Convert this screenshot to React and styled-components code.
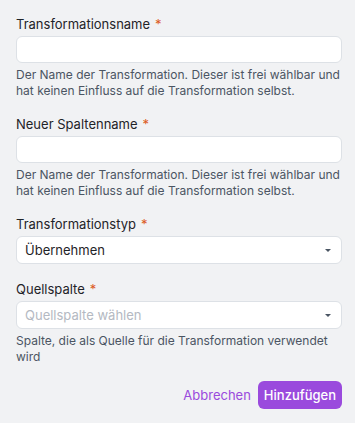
import React from 'react';
import styled, { createGlobalStyle } from 'styled-components';

const GlobalStyle = createGlobalStyle`
  html, body {
    margin: 0;
    padding: 0;
    background: #f1f2f4;
  }
  body {
    font-family: Inter, "Noto Sans", sans-serif;
    -webkit-font-smoothing: antialiased;
  }
`;

const Panel = styled.form`
  box-sizing: border-box;
  width: 355px;
  height: 423px;
  padding: 14px 13px 0 16px;
  background: #f1f2f4;
  display: flex;
  flex-direction: column;
  gap: 15px;
`;

const Field = styled.div`
  display: flex;
  flex-direction: column;
`;

const Label = styled.label`
  font-size: 13px;
  line-height: 20px;
  color: #1f2328;
  margin-bottom: 2px;
`;

const Required = styled.span`
  color: #dc5a22;
  margin-left: 5px;
`;

const Input = styled.input`
  box-sizing: border-box;
  height: 27px;
  width: 100%;
  border: 1px solid #dde1e6;
  border-radius: 6px;
  background: #fff;
  padding: 0 8px;
  font: inherit;
  font-size: 13px;
  outline: none;
`;

const Select = styled.div`
  box-sizing: border-box;
  height: 28px;
  width: 100%;
  border: 1px solid #dde1e6;
  border-radius: 6px;
  background: #fff;
  padding: 0 10px 0 8px;
  display: flex;
  align-items: center;
  justify-content: space-between;
  font-size: 13px;
  color: ${p => (p.$placeholder ? '#b4b9c2' : '#1f2328')};
`;

const Caret = styled.span`
  width: 0;
  height: 0;
  border-left: 3px solid transparent;
  border-right: 3px solid transparent;
  border-top: 3px solid #4a5563;
`;

const Help = styled.p`
  margin: 4px 0 0;
  font-size: 12px;
  line-height: 16px;
  color: #4b5563;
`;

const Actions = styled.div`
  display: flex;
  justify-content: flex-end;
  align-items: center;
  gap: 7px;
  margin-top: 1px;
`;

const Button = styled.button`
  height: 28px;
  border: none;
  border-radius: 6px;
  padding: ${p => (p.$primary ? '0 6px' : '0')};
  font: inherit;
  font-size: 13px;
  font-weight: ${p => (p.$primary ? 500 : 400)};
  cursor: pointer;
  background: ${p => (p.$primary ? '#9a4add' : 'transparent')};
  color: ${p => (p.$primary ? '#fff' : '#9a4add')};
`;

function TextField({ label, help }) {
  return (
    <Field>
      <Label>
        {label}
        <Required>*</Required>
      </Label>
      <Input type="text" />
      {help && <Help>{help}</Help>}
    </Field>
  );
}

function SelectField({ label, value, placeholder, help }) {
  return (
    <Field>
      <Label>
        {label}
        <Required>*</Required>
      </Label>
      <Select $placeholder={!value}>
        <span>{value || placeholder}</span>
        <Caret />
      </Select>
      {help && <Help>{help}</Help>}
    </Field>
  );
}

const nameHelp =
  'Der Name der Transformation. Dieser ist frei wählbar und hat keinen Einfluss auf die Transformation selbst.';

export default function App() {
  return (
    <>
      <GlobalStyle />
      <Panel onSubmit={e => e.preventDefault()}>
        <TextField label="Transformationsname" help={nameHelp} />
        <TextField label="Neuer Spaltenname" help={nameHelp} />
        <SelectField label="Transformationstyp" value="Übernehmen" />
        <SelectField
          label="Quellspalte"
          placeholder="Quellspalte wählen"
          help="Spalte, die als Quelle für die Transformation verwendet wird"
        />
        <Actions>
          <Button type="button">Abbrechen</Button>
          <Button type="submit" $primary>
            Hinzufügen
          </Button>
        </Actions>
      </Panel>
    </>
  );
}
